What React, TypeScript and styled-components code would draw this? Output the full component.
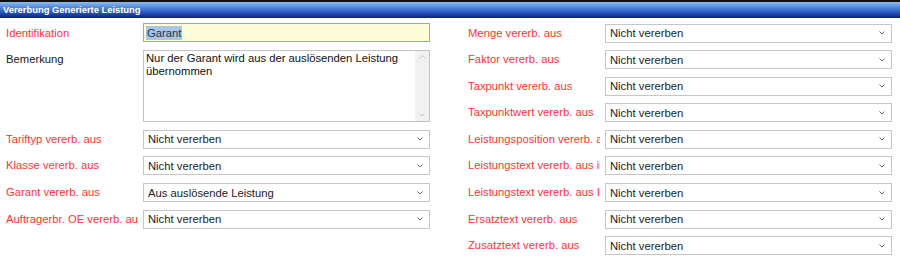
import React from "react";
import styled, { createGlobalStyle } from "styled-components";

const Global = createGlobalStyle`
  html, body { margin: 0; padding: 0; background: #ffffff; }
  body { font-family: "Liberation Sans", Arial, sans-serif; }
`;

const Panel = styled.div`
  width: 900px;
  height: 262px;
  background: #ffffff;
  overflow: hidden;
`;

const TitleBar = styled.div`
  height: 16px;
  border-top: 2px solid #101010;
  background: linear-gradient(to bottom, #8cbcf2 0%, #4f86dc 35%, #2a56bc 65%, #0c1e82 100%);
  color: #ffffff;
  font-size: 9.4px;
  font-weight: bold;
  line-height: 16px;
  padding-left: 3px;
  white-space: nowrap;
`;

const Content = styled.div`
  display: flex;
  gap: 38px;
  padding: 5px 0 0 6px;
`;

const Section = styled.div<{ $label: number }>`
  display: grid;
  grid-template-columns: ${(p) => p.$label}px 287px;
  grid-auto-rows: 19px;
  row-gap: 7.6px;
  column-gap: ${(p) => 137 - p.$label}px;
`;

const Label = styled.div<{ $required?: boolean; $span?: number }>`
  display: flex;
  align-items: center;
  align-self: start;
  height: 19px;
  grid-row: span ${(p) => p.$span ?? 1};
  font-size: 11.25px;
  color: ${(p) => (p.$required ? "#ff3434" : "#1a1a1a")};
  white-space: nowrap;
  overflow: hidden;
`;

const TextInput = styled.div`
  box-sizing: border-box;
  height: 19px;
  border: 1px solid #86abd8;
  background: #fffcdc;
  padding-left: 2px;
  display: flex;
  align-items: center;
  font-size: 11.25px;
`;

const Selected = styled.span`
  background: #a9c6e6;
  color: #1f3350;
  padding: 1px;
`;

const MemoBox = styled.div`
  box-sizing: border-box;
  grid-row: span 3;
  border: 1px solid #c2c2c2;
  background: #ffffff;
  display: flex;
`;

const MemoText = styled.div`
  flex: 1;
  padding: 1px 0 0 2px;
  font-size: 11.25px;
  line-height: 13px;
  color: #111111;
`;

const ScrollTrack = styled.div`
  width: 14px;
  background: #f1f1f1;
  display: flex;
  flex-direction: column;
  justify-content: space-between;
  align-items: center;
  padding: 4px 0;
`;

const SelectWrap = styled.div`
  position: relative;
  height: 19px;
`;

const Select = styled.select`
  appearance: none;
  -webkit-appearance: none;
  box-sizing: border-box;
  width: 100%;
  height: 19px;
  margin: 0;
  border: 1px solid #c6c6c6;
  border-radius: 0;
  background: #ffffff;
  padding: 0 0 0 4px;
  font-family: "Liberation Sans", Arial, sans-serif;
  font-size: 11.25px;
  color: #1c1c1c;
  outline: none;
`;

const Chevron = styled.svg`
  position: absolute;
  right: 7px;
  top: 8px;
  pointer-events: none;
`;

const Down = ({ color = "#6a6a6a" }: { color?: string }) => (
  <svg width="6" height="4" viewBox="0 0 6 4">
    <path d="M0.5 0.5 L3 3 L5.5 0.5" fill="none" stroke={color} strokeWidth="1" />
  </svg>
);

const Up = ({ color = "#c4c4c4" }: { color?: string }) => (
  <svg width="7" height="4" viewBox="0 0 7 4">
    <path d="M0.5 3.5 L3.5 0.5 L6.5 3.5" fill="none" stroke={color} strokeWidth="1" />
  </svg>
);

const DropDown = ({ value }: { value: string }) => (
  <SelectWrap>
    <Select defaultValue={value}>
      <option>Nicht vererben</option>
      <option>Aus auslösende Leistung</option>
    </Select>
    <Chevron width="6" height="4" viewBox="0 0 6 4">
      <path d="M0.5 0.5 L3 3 L5.5 0.5" fill="none" stroke="#6a6a6a" strokeWidth="1" />
    </Chevron>
  </SelectWrap>
);

const leftRows: { label: string; value: string }[] = [
  { label: "Tariftyp vererb. aus", value: "Nicht vererben" },
  { label: "Klasse vererb. aus", value: "Nicht vererben" },
  { label: "Garant vererb. aus", value: "Aus auslösende Leistung" },
  { label: "Auftragerbr. OE vererb. aus", value: "Nicht vererben" },
];

const rightRows: string[] = [
  "Menge vererb. aus",
  "Faktor vererb. aus",
  "Taxpunkt vererb. aus",
  "Taxpunktwert vererb. aus",
  "Leistungsposition vererb. aus",
  "Leistungstext vererb. aus internem Text",
  "Leistungstext vererb. aus Intern",
  "Ersatztext vererb. aus",
  "Zusatztext vererb. aus",
];

export default function App() {
  return (
    <>
      <Global />
      <Panel>
        <TitleBar>Vererbung Generierte Leistung</TitleBar>
        <Content>
          <Section $label={132}>
            <Label $required>Identifikation</Label>
            <TextInput>
              <Selected>Garant</Selected>
            </TextInput>
            <Label $span={3}>Bemerkung</Label>
            <MemoBox>
              <MemoText>
                Nur der Garant wird aus der auslösenden Leistung
                <br />
                übernommen
              </MemoText>
              <ScrollTrack>
                <Up />
                <Down color="#c4c4c4" />
              </ScrollTrack>
            </MemoBox>
            {leftRows.map((r) => (
              <React.Fragment key={r.label}>
                <Label $required>{r.label}</Label>
                <DropDown value={r.value} />
              </React.Fragment>
            ))}
          </Section>
          <Section $label={132}>
            {rightRows.map((l) => (
              <React.Fragment key={l}>
                <Label $required>{l}</Label>
                <DropDown value="Nicht vererben" />
              </React.Fragment>
            ))}
          </Section>
        </Content>
      </Panel>
    </>
  );
}
